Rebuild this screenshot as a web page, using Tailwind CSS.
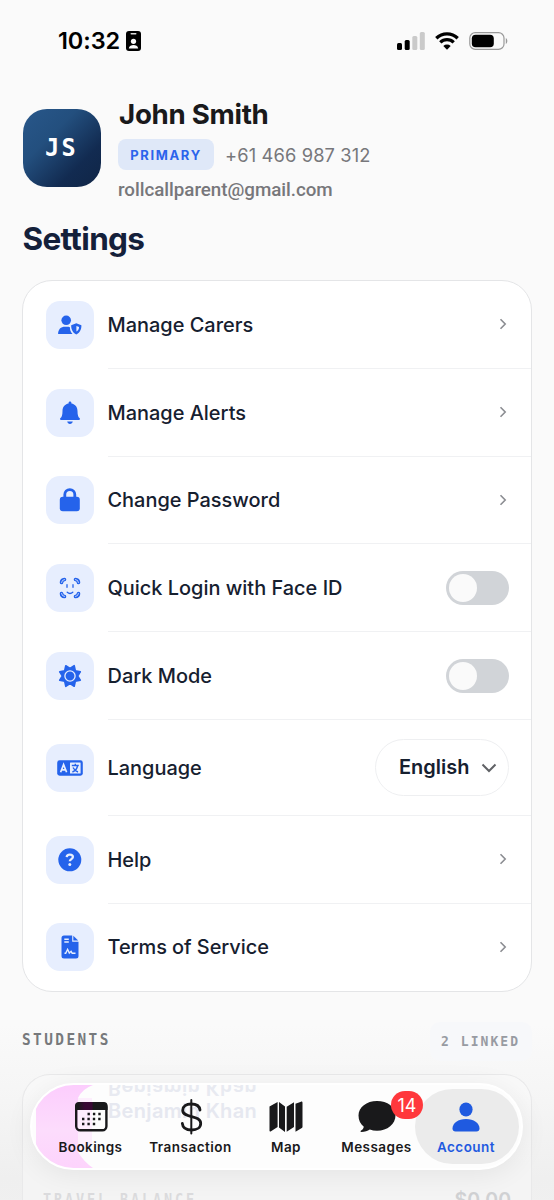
<!DOCTYPE html>
<html lang="en">
<head>
<meta charset="utf-8">
<title>Settings</title>
<script src="https://cdn.jsdelivr.net/npm/@tailwindcss/browser@4"></script>
</head>
<body class="bg-[#fafafa]">
<div class="relative flex h-[1200px] w-[554px] flex-col overflow-hidden bg-[#fafafa] font-['Inter',sans-serif] text-[#16202f]">

  <!-- Status bar -->
  <header class="flex h-[82px] shrink-0 items-center justify-between pl-[58px] pr-[46px] text-black">
    <div class="flex items-center gap-[5px]">
      <span class="w-[63px] whitespace-nowrap text-[23.500px] font-semibold leading-none tracking-[-0.100px]">10:32</span>
      <svg class="h-5 w-[15px]" viewBox="0 0 15 20"><rect width="15" height="20" rx="3"/><rect x="4.500" y="2" width="6" height="1.400" rx=".7" fill="#ddd"/><circle cx="7.500" cy="10.300" r="2.600" fill="#fafafa"/><path d="M2.800 17.500c.3-2.700 2.600-3.400 4.700-3.400s4.400.7 4.700 3.400z" fill="#fafafa"/></svg>
    </div>
    <div class="flex items-center">
      <svg class="h-[18px] w-7" viewBox="0 0 28 18"><rect y="11" width="5" height="7" rx="1.500"/><rect x="7.700" y="8" width="5" height="10" rx="1.500"/><rect x="15.300" y="4" width="5" height="14" rx="1.500" fill="#cacaca"/><rect x="22.800" y="0" width="5" height="18" rx="1.500" fill="#cacaca"/></svg>
      <svg class="ml-[10px] h-[18px] w-6" viewBox="0 0 24 18"><g fill="none" stroke="#000" stroke-width="3.300"><path d="M1.300 6.200a15.300 15.300 0 0 1 21.400 0"/><path d="M5.300 10.400a9.600 9.600 0 0 1 13.400 0"/></g><path d="M12 17.800 8.300 14a5.400 5.400 0 0 1 7.400 0z"/></svg>
      <svg class="ml-[10px] h-[18px] w-[39px]" viewBox="0 0 39 18"><rect x=".8" y=".6" width="34.200" height="16.800" rx="5.500" fill="none" stroke="#999" stroke-width="1.200"/><rect x="2.800" y="2.700" width="22" height="12.600" rx="3.800"/><path d="M36.800 6c2 .8 2 5.200 0 6z" fill="#999"/></svg>
    </div>
  </header>

  <!-- Profile -->
  <section class="flex h-[123px] shrink-0 gap-4 pl-[23px] pt-[16px]">
    <div class="mt-[11px] flex h-[78px] w-[78px] items-center justify-center rounded-[24px] bg-[linear-gradient(135deg,#28578a_0%,#234f7e_35%,#122b51_72%,#102546_100%)] font-['DejaVu_Sans_Mono',monospace] text-[25px] font-bold text-white"><span class="origin-center scale-x-[0.940] pr-px tracking-[2.500px]">JS</span></div>
    <div class="flex flex-col">
      <h1 class="ml-[2px] h-[34px] whitespace-nowrap text-[27.700px] font-bold leading-[33px] tracking-[-0.300px] text-[#19191b]">John Smith</h1>
      <div class="mt-[7px] flex items-center gap-[11px]">
        <span class="ml-px flex h-[31px] w-[96px] items-center justify-center rounded-[8px] bg-[#dfe8f8] pt-[2px] text-[13px] font-bold tracking-[1.650px] text-[#2b64ec]">PRIMARY</span>
        <span class="whitespace-nowrap pt-px text-[18.300px] leading-6 tracking-[0.130px] text-[#77777b]">+61 466 987 312</span>
      </div>
      <p class="ml-px mt-[8px] whitespace-nowrap font-['Roboto',sans-serif] text-[18.800px] font-medium leading-6 tracking-[-0.040px] text-[#77777b]">rollcallparent@gmail.com</p>
    </div>
  </section>

  <h2 class="h-[75px] shrink-0 whitespace-nowrap pl-[22.500px] pt-[14px] text-[31.500px] font-bold leading-[40px] tracking-[-0.650px] text-[#14203a]">Settings</h2>

  <!-- Settings card -->
  <main class="mx-auto flex h-[712px] w-[510px] shrink-0 flex-col overflow-hidden rounded-[30px] border border-[#e4e5e7] bg-white pl-[22.500px] text-[19.950px] font-medium">
    <div class="flex h-[87.750px] shrink-0 items-center gap-[14px]">
      <span class="flex h-12 w-12 shrink-0 items-center justify-center rounded-[14px] bg-[#e7eefe] text-[#2563eb]"><svg class="h-6 w-6" viewBox="0 0 24 24" fill="currentColor"><circle cx="8.200" cy="7.300" r="4.800"/><path d="M.1 21c0-4.800 2.700-7.300 7-7.300h2c1 0 2 .1 2.800.5 0 2.600.8 5 2.600 6.800z"/><path fill-rule="evenodd" d="M18.300 10.200l5.100 2c.2 4.200-1.700 7.700-5.100 9.200-3.400-1.500-5.300-5-5.100-9.200zm.1 2.700v5.700c1.700-1.100 2.600-2.800 2.700-4.700z"/></svg></span>
      <div class="flex h-full flex-1 items-center justify-between border-b border-[#f0f1f3] pr-[22px]"><span class="pt-[3px]">Manage Carers</span><svg class="h-3 w-3" viewBox="0 0 12 12" fill="none" stroke="#8b8d92" stroke-width="1.600"><path d="M3.500 1.300 8.200 6l-4.700 4.700"/></svg></div>
    </div>
    <div class="flex h-[87.750px] shrink-0 items-center gap-[14px]">
      <span class="flex h-12 w-12 shrink-0 items-center justify-center rounded-[14px] bg-[#e7eefe] text-[#2563eb]"><svg class="h-6 w-6" viewBox="0 0 24 24" fill="currentColor"><path d="M12 .5c-.8 0-1.400.6-1.400 1.400v.6C6.700 3.200 4.500 6.200 4.500 9.900c0 4.200-.8 6-2 7.200-.8.800-.5 1.800.5 1.800h18c1 0 1.300-1 .5-1.800-1.200-1.200-2-3-2-7.200 0-3.700-2.200-6.700-6.100-7.400v-.6c0-.8-.6-1.400-1.400-1.400zM9.200 20.600h5.600c-.3 1.600-1.400 2.400-2.800 2.400s-2.500-.8-2.800-2.400z"/></svg></span>
      <div class="flex h-full flex-1 items-center justify-between border-b border-[#f0f1f3] pr-[22px]"><span class="pt-[3px]">Manage Alerts</span><svg class="h-3 w-3" viewBox="0 0 12 12" fill="none" stroke="#8b8d92" stroke-width="1.600"><path d="M3.500 1.300 8.200 6l-4.700 4.700"/></svg></div>
    </div>
    <div class="flex h-[87.750px] shrink-0 items-center gap-[14px]">
      <span class="flex h-12 w-12 shrink-0 items-center justify-center rounded-[14px] bg-[#e7eefe] text-[#2563eb]"><svg class="h-6 w-6" viewBox="0 0 24 24" fill="currentColor"><rect x="1.800" y="8.700" width="20" height="14.500" rx="3"/><path d="M6.800 10V6.600a5 5 0 0 1 10 0V10" fill="none" stroke="currentColor" stroke-width="2.800"/></svg></span>
      <div class="flex h-full flex-1 items-center justify-between border-b border-[#f0f1f3] pr-[22px]"><span class="pt-[3px]">Change Password</span><svg class="h-3 w-3" viewBox="0 0 12 12" fill="none" stroke="#8b8d92" stroke-width="1.600"><path d="M3.500 1.300 8.200 6l-4.700 4.700"/></svg></div>
    </div>
    <div class="flex h-[87.750px] shrink-0 items-center gap-[14px]">
      <span class="flex h-12 w-12 shrink-0 items-center justify-center rounded-[14px] bg-[#e7eefe] text-[#2563eb]"><svg class="h-6 w-6" viewBox="0 0 24 24" fill="none" stroke="currentColor" stroke-linecap="round"><g stroke-width="3.600"><path d="M3.500 6.500Q3.700 3.700 6.500 3.500M17.500 3.500Q20.300 3.700 20.500 6.500M3.500 17.500Q3.700 20.300 6.500 20.500M20.500 17.500Q20.300 20.300 17.500 20.500"/></g><g stroke="#e7eefe" stroke-width=".8"><path d="M3.500 6.500Q3.700 3.700 6.500 3.500M17.500 3.500Q20.300 3.700 20.500 6.500M3.500 17.500Q3.700 20.300 6.500 20.500M20.500 17.500Q20.300 20.300 17.500 20.500"/></g><path d="M9 8.700v2.600M15 8.700v2.600M9.200 16.300c1.800 1.600 3.800 1.600 5.600 0" stroke-width="1.300"/></svg></span>
      <div class="flex h-full flex-1 items-center justify-between border-b border-[#f0f1f3] pr-[22px]"><span class="pt-[3px]">Quick Login with Face ID</span><span class="flex h-[34px] w-[63px] items-center rounded-full bg-[#d1d4d8] pl-[3px]"><span class="h-7 w-7 rounded-full bg-[#fafafa]"></span></span></div>
    </div>
    <div class="flex h-[87.750px] shrink-0 items-center gap-[14px]">
      <span class="flex h-12 w-12 shrink-0 items-center justify-center rounded-[14px] bg-[#e7eefe] text-[#2563eb]"><svg class="h-6 w-6" viewBox="0 0 24 24" fill="currentColor" stroke="currentColor" stroke-width="1.600" stroke-linejoin="round"><path d="M16.200 1.700 17.300 6.700 22.300 7.800 19.600 12 22.300 16.200 17.300 17.300 16.200 22.300 12 19.600 7.800 22.300 6.700 17.300 1.700 16.200 4.400 12 1.700 7.800 6.700 6.700 7.800 1.700 12 4.400z"/><circle cx="12" cy="12" r="5.100" stroke="#e7eefe" stroke-width="1.300"/></svg></span>
      <div class="flex h-full flex-1 items-center justify-between border-b border-[#f0f1f3] pr-[22px]"><span class="pt-[3px]">Dark Mode</span><span class="mt-px flex h-[34px] w-[63px] items-center rounded-full bg-[#d1d4d8] pl-[3px]"><span class="h-7 w-7 rounded-full bg-[#fafafa]"></span></span></div>
    </div>
    <div class="flex h-[96px] shrink-0 items-center gap-[14px]">
      <span class="flex h-12 w-12 shrink-0 items-center justify-center rounded-[14px] bg-[#e7eefe] text-[#2563eb]"><svg class="h-4 w-[26px]" viewBox="0 0 26 16"><rect x=".2" y=".3" width="25.600" height="15.400" rx="2.400" fill="currentColor"/><rect x="13" y="2.600" width="10.600" height="10.800" rx=".5" fill="#e7eefe"/><path d="M3.600 12.200 6.600 4.600l3 7.600M4.700 9.900h3.900" fill="none" stroke="#e7eefe" stroke-width="1.700"/><path d="M14.800 5.500h7M18.300 3.700v1.800M20.600 5.700c-.4 3-2.500 5.200-5.200 6.300M16 7.500c1 2 2.800 3.700 5 4.500" fill="none" stroke="currentColor" stroke-width="1.400"/></svg></span>
      <div class="flex h-full flex-1 items-center justify-between border-b border-[#f0f1f3] pr-[22px]"><span class="pt-[3px]">Language</span><span class="flex h-[57px] w-[134px] items-center justify-between rounded-full border border-[#eeeff1] pl-[23px] pr-[11px] font-semibold"><span class="pt-[2px]">English</span><svg class="h-4 w-4" viewBox="0 0 16 16" fill="none" stroke="#606266" stroke-width="2"><path d="M1.500 5.500 8 12l6.500-6.500"/></svg></span></div>
    </div>
    <div class="flex h-[87.750px] shrink-0 items-center gap-[14px]">
      <span class="flex h-12 w-12 shrink-0 items-center justify-center rounded-[14px] bg-[#e7eefe] text-[#2563eb]"><svg class="h-6 w-6" viewBox="0 0 24 24"><circle cx="11.800" cy="11.800" r="11.500" fill="currentColor"/><path d="M8.700 9.100c.1-1.700 1.300-2.500 3.100-2.500s3.100.9 3.100 2.400c0 2.100-3.100 2.100-3.100 4.300" fill="none" stroke="#e7eefe" stroke-width="2.300"/><circle cx="11.800" cy="16.500" r="1.500" fill="#e7eefe"/></svg></span>
      <div class="flex h-full flex-1 items-center justify-between border-b border-[#f0f1f3] pr-[22px]"><span class="pt-[3px]">Help</span><svg class="h-3 w-3" viewBox="0 0 12 12" fill="none" stroke="#8b8d92" stroke-width="1.600"><path d="M3.500 1.300 8.200 6l-4.700 4.700"/></svg></div>
    </div>
    <div class="flex h-[87.750px] shrink-0 items-center gap-[14px]">
      <span class="flex h-12 w-12 shrink-0 items-center justify-center rounded-[14px] bg-[#e7eefe] text-[#2563eb]"><svg class="h-6 w-6" viewBox="0 0 24 24"><path d="M6 .5h8.200v6.200h6.300v14.200a2.500 2.500 0 0 1-2.500 2.500H6a2.500 2.500 0 0 1-2.500-2.500V3A2.500 2.500 0 0 1 6 .5z" fill="currentColor"/><path d="M15.300.8v4.800h4.900z" fill="currentColor"/><path d="M6.300 4.200h4.500M6.300 7h4.500M6.500 18.300h1.200l1.900-4 1.700 3.700 1.800-1.700 1.100 2h3.300" fill="none" stroke="#e7eefe" stroke-width="1.400"/></svg></span>
      <div class="flex h-full flex-1 items-center justify-between pr-[22px]"><span class="pt-[2px] tracking-[-0.050px]">Terms of Service</span><svg class="h-3 w-3" viewBox="0 0 12 12" fill="none" stroke="#8b8d92" stroke-width="1.600"><path d="M3.500 1.300 8.200 6l-4.700 4.700"/></svg></div>
    </div>
  </main>

  <!-- Students -->
  <section class="flex grow flex-col bg-[linear-gradient(#fafafa_15%,#f5f5f5_50%,#efefef_85%,#f0f0f0_100%)] px-[22px]">
    <div class="flex h-[82px] shrink-0 items-center justify-between pt-[16px] font-['DejaVu_Sans_Mono',monospace] font-bold">
      <span class="origin-left scale-x-[0.930] whitespace-nowrap text-[15.500px] tracking-[2.600px] text-[#77797c]">STUDENTS</span>
      <span class="flex h-[39px] w-[102px] items-center justify-center rounded-[10px] bg-[#f7f8fa]"><span class="scale-x-[0.930] whitespace-nowrap text-[14px] tracking-[2.200px] text-[#989ba2]">2 LINKED</span></span>
    </div>
    <div class="flex grow flex-col rounded-t-[28px] border border-b-0 border-[#e9e9ea] bg-white/30 px-[20px] pt-[115px]">
      <div class="flex justify-between leading-5 text-[#dbdbdd]">
        <span class="origin-left scale-x-90 whitespace-nowrap font-['DejaVu_Sans_Mono',monospace] text-[15px] font-bold tracking-[3.200px]">TRAVEL BALANCE</span>
        <span class="text-[19.500px] font-semibold text-[#d0d1d3]">$0.00</span>
      </div>
    </div>
  </section>

  <!-- Floating tab bar -->
  <nav class="absolute left-[30px] top-[1083px] h-[87px] w-[493px] overflow-hidden rounded-full border-2 border-white bg-[#fdfdfd] shadow-[0_4px_28px_rgba(0,0,0,0.070)]">
    <svg class="absolute left-[4px] top-0 h-[83px] w-[64px]" viewBox="0 0 64 83"><defs><linearGradient id="pink" x1="0" y1="0" x2="0" y2="1"><stop offset="0" stop-color="#fccdfd"/><stop offset=".55" stop-color="#fcdcfc"/><stop offset="1" stop-color="#fdd3fc"/></linearGradient></defs><path d="M0 0H57Q46 4 42 13V67Q48 77 57 83H0z" fill="url(#pink)"/><path d="M42 13h14v48l-14 6z" fill="#fdeefd"/></svg>
    <span class="absolute left-[76px] top-[14px] whitespace-nowrap text-[20px] font-semibold leading-6 tracking-[0.350px] text-[#e6e8f0]">Benjamin Khan</span>
    <span class="absolute left-[76px] top-[-9px] -scale-y-100 whitespace-nowrap text-[20px] font-semibold leading-6 tracking-[0.350px] text-[#e8eaf1]">Benjamin Khan</span>
    <span class="absolute left-[383px] top-[4px] h-[75px] w-[104px] rounded-full bg-[#ebebeb]"></span>
    <div class="relative flex h-full pl-[16px] text-[13.500px] font-semibold leading-4 text-[#19191b]">
      <div class="flex w-[85px] flex-col items-center pt-[14px]">
        <svg class="h-9 w-9" viewBox="0 0 36 36"><defs><linearGradient id="cal"><stop offset=".1" stop-color="#19191b"/><stop offset=".3" stop-color="#380834"/><stop offset=".52" stop-color="#380834"/><stop offset=".56" stop-color="#19191b"/></linearGradient></defs><rect x="3.200" y="4.200" width="30.200" height="27" rx="4" fill="none" stroke="#19191b" stroke-width="2.400"/><path d="M2 11V7a4 4 0 0 1 4-4h24.600a4 4 0 0 1 4 4v4z" fill="url(#cal)"/><path d="M14.500 15h14M9 20h19.500M9 25h14" stroke="#19191b" stroke-width="2.400" stroke-dasharray="2.400 3"/></svg>
        <span class="mt-[4px] tracking-[0.400px]">Bookings</span>
      </div>
      <div class="flex w-[115px] flex-col items-center pt-[14px]">
        <svg class="h-9 w-9" viewBox="0 0 36 36" fill="none" stroke="#19191b" stroke-width="2.800" stroke-linecap="round"><path d="M27 11c-.5-4-4-6-8.800-6-5 0-8.500 2.400-8.500 6.200 0 8.600 18 4.300 18 13.200 0 4-3.700 6.600-9 6.600-5.500 0-9-2.400-9.400-6.700"/><path d="M18.300 1v33.500" stroke-width="2"/></svg>
        <span class="mt-[4px] tracking-[0.500px]">Transaction</span>
      </div>
      <div class="flex w-[76px] flex-col items-center pt-[14px]">
        <svg class="h-9 w-9" viewBox="0 0 36 36" fill="#19191b"><path d="M1.500 7.500 9.600 3v25L3 32.300c-.8.500-1.500 0-1.500-.8zM11 3l6 4.600v25.300L11 28.400zM18.700 7.700 26 3.200v24.700l-7.300 4.900zM27.500 4.800 33 2.700c.8-.3 1.500.2 1.500 1v24c0 .5-.2.900-.7 1.200l-6.300 3.800z"/></svg>
        <span class="mt-[4px] tracking-[0.400px]">Map</span>
      </div>
      <div class="relative flex w-[105px] flex-col items-center pt-[14px]">
        <svg class="h-9 w-[38px]" viewBox="0 0 38 36" fill="#19191b"><path d="M19 2C8.500 2 .5 8.200.5 16.500c0 4.800 2 8.500 5.300 11.200-.3 1.900-1.500 3.100-3 4.100-.6.500-.3 1.200.5 1.200 3.500 0 6.300-.8 8.500-2.400 2.200.8 4.600 1.200 7.200 1.200 10.500 0 18.500-6.800 18.500-15.300S29.500 2 19 2z"/></svg>
        <span class="mt-[4px] tracking-[0.450px]">Messages</span>
        <span class="absolute left-[67px] top-[6px] flex h-7 w-8 items-center justify-center rounded-full bg-[#ff383c] pt-px text-[18px] font-normal text-white">14</span>
      </div>
      <div class="flex w-[74px] flex-col items-center pt-[14px] text-[#1f5ae0]">
        <svg class="h-9 w-9" viewBox="0 0 36 36" fill="currentColor"><ellipse cx="18" cy="10.500" rx="6.600" ry="7"/><path d="M4.500 29.500c0-5.500 5.800-9.500 13.500-9.500s13.500 4 13.500 9.500c0 2-1.200 3-3 3h-21c-1.800 0-3-1-3-3z"/></svg>
        <span class="mt-[4px] tracking-[0.450px]">Account</span>
      </div>
    </div>
  </nav>
</div>
</body>
</html>
